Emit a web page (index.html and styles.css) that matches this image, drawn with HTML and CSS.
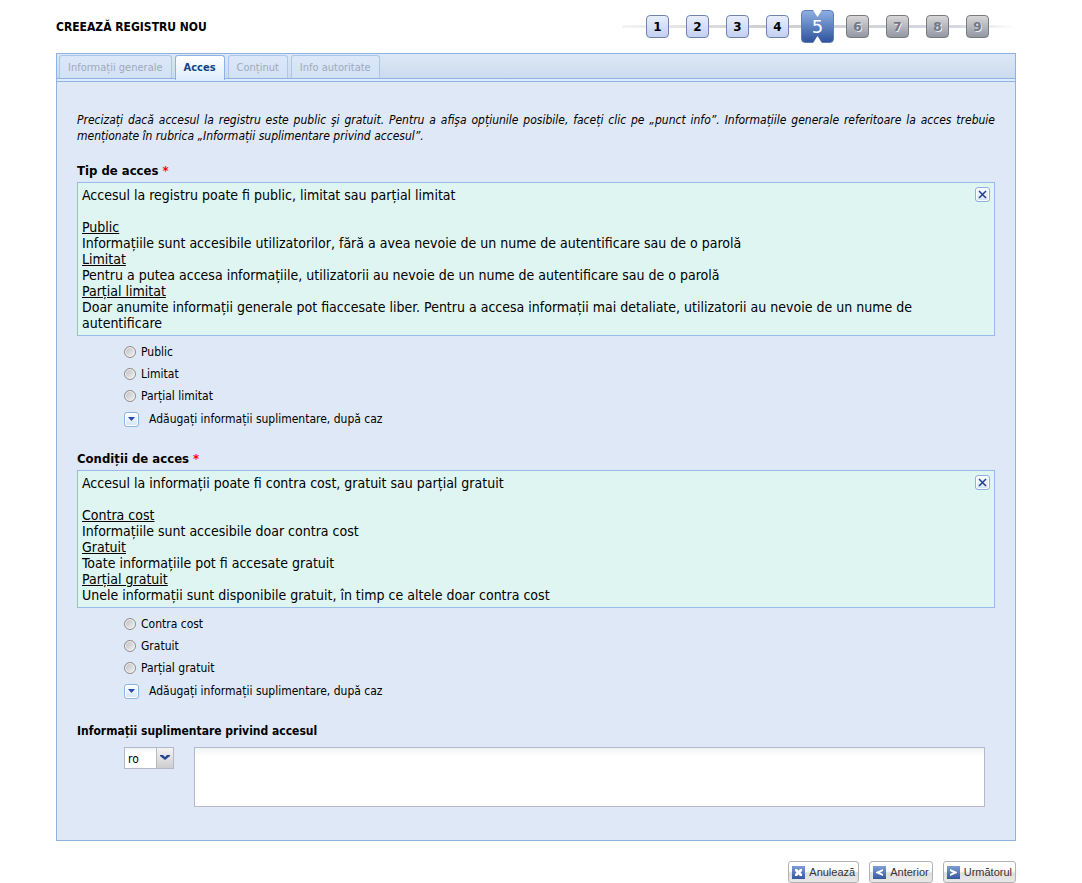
FILE: index.html
```
<!DOCTYPE html>
<html lang="ro">
<head>
<meta charset="utf-8">
<title>Creează registru nou</title>
<link rel="stylesheet" href="styles.css">
</head>
<body>
<div class="page">
  <header class="header">
    <h1 class="title">CREEAZĂ REGISTRU NOU</h1>
    <ol class="steps">
      <li class="step">1</li>
      <li class="step">2</li>
      <li class="step">3</li>
      <li class="step">4</li>
      <li class="step step-active" aria-current="step">5</li>
      <li class="step step-off">6</li>
      <li class="step step-off">7</li>
      <li class="step step-off">8</li>
      <li class="step step-off">9</li>
    </ol>
  </header>

  <main class="panel">
    <nav class="tabs">
      <button class="tab" type="button" disabled>Informații generale</button>
      <button class="tab tab-active" type="button">Acces</button>
      <button class="tab" type="button" disabled>Conținut</button>
      <button class="tab" type="button" disabled>Info autoritate</button>
    </nav>
    <form class="form" id="access-form">
      <p class="intro">Precizați dacă accesul la registru este public şi gratuit. Pentru a afişa opțiunile posibile, faceți clic pe „punct info”. Informațiile generale referitoare la acces trebuie menționate în rubrica „Informații suplimentare privind accesul”.</p>

      <section class="group">
        <h2 class="heading">Tip de acces <span class="required">*</span></h2>
        <div class="info">
          <div class="info-text">
            <p>Accesul la registru poate fi public, limitat sau parțial limitat</p>
            <br>
            <p><u>Public</u></p>
            <p>Informațiile sunt accesibile utilizatorilor, fără a avea nevoie de un nume de autentificare sau de o parolă</p>
            <p><u>Limitat</u></p>
            <p>Pentru a putea accesa informațiile, utilizatorii au nevoie de un nume de autentificare sau de o parolă</p>
            <p><u>Parțial limitat</u></p>
            <p>Doar anumite informații generale pot fiaccesate liber. Pentru a accesa informații mai detaliate, utilizatorii au nevoie de un nume de autentificare</p>
          </div>
          <button class="mini" type="button" aria-label="Închide"><svg width="9" height="9" viewBox="0 0 9 9"><path d="M1 1l7 7M8 1L1 8" stroke="#1f3f93" stroke-width="1.5"/></svg></button>
        </div>
        <div class="options">
          <label class="option"><input class="radio" type="radio" name="tip">Public</label>
          <label class="option"><input class="radio" type="radio" name="tip">Limitat</label>
          <label class="option"><input class="radio" type="radio" name="tip">Parțial limitat</label>
          <div class="more"><button class="mini" type="button" aria-labelledby="more-1"><svg width="7" height="4" viewBox="0 0 7 4"><path d="M0 0h7L3.500 4z" fill="#234cae"/></svg></button><span id="more-1">Adăugați informații suplimentare, după caz</span></div>
        </div>
      </section>

      <section class="group">
        <h2 class="heading">Condiții de acces <span class="required">*</span></h2>
        <div class="info">
          <div class="info-text">
            <p>Accesul la informații poate fi contra cost, gratuit sau parțial gratuit</p>
            <br>
            <p><u>Contra cost</u></p>
            <p>Informațiile sunt accesibile doar contra cost</p>
            <p><u>Gratuit</u></p>
            <p>Toate informațiile pot fi accesate gratuit</p>
            <p><u>Parțial gratuit</u></p>
            <p>Unele informații sunt disponibile gratuit, în timp ce altele doar contra cost</p>
          </div>
          <button class="mini" type="button" aria-label="Închide"><svg width="9" height="9" viewBox="0 0 9 9"><path d="M1 1l7 7M8 1L1 8" stroke="#1f3f93" stroke-width="1.5"/></svg></button>
        </div>
        <div class="options">
          <label class="option"><input class="radio" type="radio" name="conditii">Contra cost</label>
          <label class="option"><input class="radio" type="radio" name="conditii">Gratuit</label>
          <label class="option"><input class="radio" type="radio" name="conditii">Parțial gratuit</label>
          <div class="more"><button class="mini" type="button" aria-labelledby="more-2"><svg width="7" height="4" viewBox="0 0 7 4"><path d="M0 0h7L3.500 4z" fill="#234cae"/></svg></button><span id="more-2">Adăugați informații suplimentare, după caz</span></div>
        </div>
      </section>

      <section class="group">
        <h2 class="heading heading-small" id="extra">Informații suplimentare privind accesul</h2>
        <div class="extra">
          <div class="lang">
            <select class="select" aria-label="Limba"><option>ro</option></select>
            <svg class="lang-arrow" width="18" height="20" viewBox="0 0 18 20" aria-hidden="true">
              <defs><linearGradient id="arrow-fill" x1="0" y1="0" x2="0" y2="1"><stop offset="0" stop-color="#f4f4f4"/><stop offset="1" stop-color="#cdcdcd"/></linearGradient></defs>
              <path d="M0 0h18v20H0z" fill="url(#arrow-fill)"/><path d="M.5 0v20M17.500 0v20" stroke="#b5b8c8"/>
              <path d="M4 7h3l2 2 2-2h3v1l-5 4-5-4z" fill="#27458f"/>
            </svg>
          </div>
          <textarea class="textarea" aria-labelledby="extra"></textarea>
        </div>
      </section>
    </form>
  </main>

  <footer class="actions">
    <button class="action" type="button"><svg class="action-icon" width="13" height="13" viewBox="0 0 13 13"><path d="M3 3h2l1.500 1.500L8 3h2v2L8.500 6.500 10 8v2H8L6.500 8.500 5 10H3V8l1.500-1.500L3 5z" fill="#fff"/></svg>Anulează</button>
    <button class="action" type="button"><svg class="action-icon" width="13" height="13" viewBox="0 0 13 13"><path d="M10 3v2L7 6.500 10 8v2L3 7V6z" fill="#fff"/></svg>Anterior</button>
    <button class="action" type="button"><svg class="action-icon" width="13" height="13" viewBox="0 0 13 13"><path d="M3 3v2l3 1.500L3 8v2l7-3V6z" fill="#fff"/></svg>Următorul</button>
  </footer>
</div>
</body>
</html>
```
FILE: styles.css
```
* { box-sizing: border-box; }

body {
  margin: 0;
  background: #fff;
  color: #000;
  font: 12px/16px "DejaVu Sans Condensed", "Noto Sans", sans-serif;
}

h1, h2, p { margin: 0; }
button, select, textarea { font: inherit; color: inherit; margin: 0; }

.page { padding: 0 66px 0 56px; }

.header {
  display: flex;
  align-items: center;
  justify-content: space-between;
  height: 53px;
}

.title { font-size: 12px; line-height: 16px; font-weight: bold; }

.steps {
  display: flex;
  align-items: center;
  gap: 17px;
  margin: 0;
  padding: 0 27px 0 24px;
  list-style: none;
  background: linear-gradient(to right, #f4f4f4, #cfcfd4 35%, #d5d8e2 85%, #fff) center / 100% 3px no-repeat;
}

.step {
  width: 23px;
  height: 23px;
  border: 1px solid #7183ad;
  border-radius: 4px;
  background: linear-gradient(#e8eefc, #c3d0ef);
  font: bold 12px/22px "DejaVu Sans", sans-serif;
  text-align: center;
}

.step-active {
  position: relative;
  width: 33px;
  height: 33px;
  margin: 0 -5px;
  border-color: #5f7db9;
  background: linear-gradient(#8eaee2, #2f549d);
  color: #fff;
  font-size: 18px;
  font-weight: normal;
  line-height: 31px;
}

.step-active::before,
.step-active::after {
  content: "";
  position: absolute;
  left: 11px;
  width: 9px;
  height: 7px;
  background: #fff;
}
.step-active::before { top: -1px; clip-path: polygon(0 0, 100% 0, 50% 100%); }
.step-active::after { bottom: -1px; clip-path: polygon(50% 0, 100% 100%, 0 100%); }

.step-off {
  border-color: #7b7b7b;
  background: linear-gradient(#d7d7d7, #9297a6);
  color: #747680;
  text-shadow: 1px 1px 0 #e9e9ee;
}

.panel { border: 1px solid #8db2e3; background: #dfe8f6; }

.tabs {
  display: flex;
  gap: 3px;
  height: 28px;
  padding: 1px 2px 0;
  border-bottom: 1px solid #8db2e3;
  background: linear-gradient(#dde8f5, #cbdbef) 0 0 / 100% 24px no-repeat, #deecfd;
  box-shadow: inset 0 -2px #deecfd, inset 0 -3px #8db2e3;
}

.tab {
  height: 23px;
  padding: 2px 8px 0;
  border: 1px solid #a9c6ec;
  border-bottom: 0;
  border-radius: 3px 3px 0 0;
  background: linear-gradient(#dce8f9, #d3e1f5);
  color: #9fa9bb;
  font-size: 11px;
  line-height: 20px;
}

.tab-active {
  height: 25px;
  padding-top: 0;
  border-color: #8db2e3;
  background: linear-gradient(#fff, #deecfd);
  color: #15428b;
  font-weight: bold;
}

.form { padding: 30px 20px 33px; }

.intro { font-style: italic; text-align: justify; }

.group { margin-top: 19px; }
.group + .group { margin-top: 21px; }

.heading {
  margin-bottom: 3px;
  font: bold 13px/16px "DejaVu Sans Condensed", "Noto Sans", sans-serif;
}
.heading-small { font-size: 12px; margin-bottom: 8px; }
.required { color: #f00; }

.info {
  display: flex;
  justify-content: space-between;
  align-items: flex-start;
  padding: 4px;
  border: 1px solid #99bbe8;
  background: #dff5f1;
}
.info-text {
  padding-right: 20px;
  font-size: 14px;
}
.info-text u { text-underline-offset: 1px; }

.mini {
  display: flex;
  flex: none;
  align-items: center;
  justify-content: center;
  width: 15px;
  height: 15px;
  padding: 0;
  border: 1px solid #8db2e3;
  border-radius: 3px;
  background: linear-gradient(#fff, #d3e4fa);
  box-shadow: inset 0 0 0 1px #fff;
}

.options { padding: 5px 0 0 47px; }

.option { display: flex; align-items: center; gap: 5px; height: 22px; }

.radio {
  appearance: none;
  width: 12px;
  height: 12px;
  margin: 0;
  border: 1px solid #8c8c8c;
  border-radius: 50%;
  background: linear-gradient(135deg, #bdbdbd, #f4f4f4);
  box-shadow: inset 0 0 0 1px #f6f6f6;
}

.more { display: flex; align-items: center; gap: 10px; height: 22px; margin-top: 1px; }

.extra { display: flex; align-items: flex-start; gap: 20px; padding: 0 10px 0 47px; }

.lang { position: relative; width: 50px; height: 22px; }
.select {
  appearance: none;
  width: 100%;
  height: 22px;
  padding: 2px 3px 0;
  border: 1px solid #b5b8c8;
  border-radius: 0;
  background: linear-gradient(#f0f3f4, #fff 5px);
}
.lang-arrow { position: absolute; top: 1px; right: 0; pointer-events: none; }

.textarea {
  flex: 1;
  height: 60px;
  padding: 2px 3px;
  border: 1px solid #b5b8c8;
  background: linear-gradient(#f0f3f4, #fff 8px);
  resize: none;
}

.actions { display: flex; justify-content: flex-end; gap: 10px; padding-top: 20px; }

.action {
  display: flex;
  align-items: center;
  gap: 4px;
  height: 22px;
  padding: 0 3px;
  border: 1px solid #b3b3b3;
  border-radius: 3px;
  background: linear-gradient(#fff 45%, #dedede 55%, #e8e8e8);
  color: #333;
  font: 11px/20px "Liberation Sans", sans-serif;
}
.action-icon { background: linear-gradient(#7f9fd8, #34589f); }
```
